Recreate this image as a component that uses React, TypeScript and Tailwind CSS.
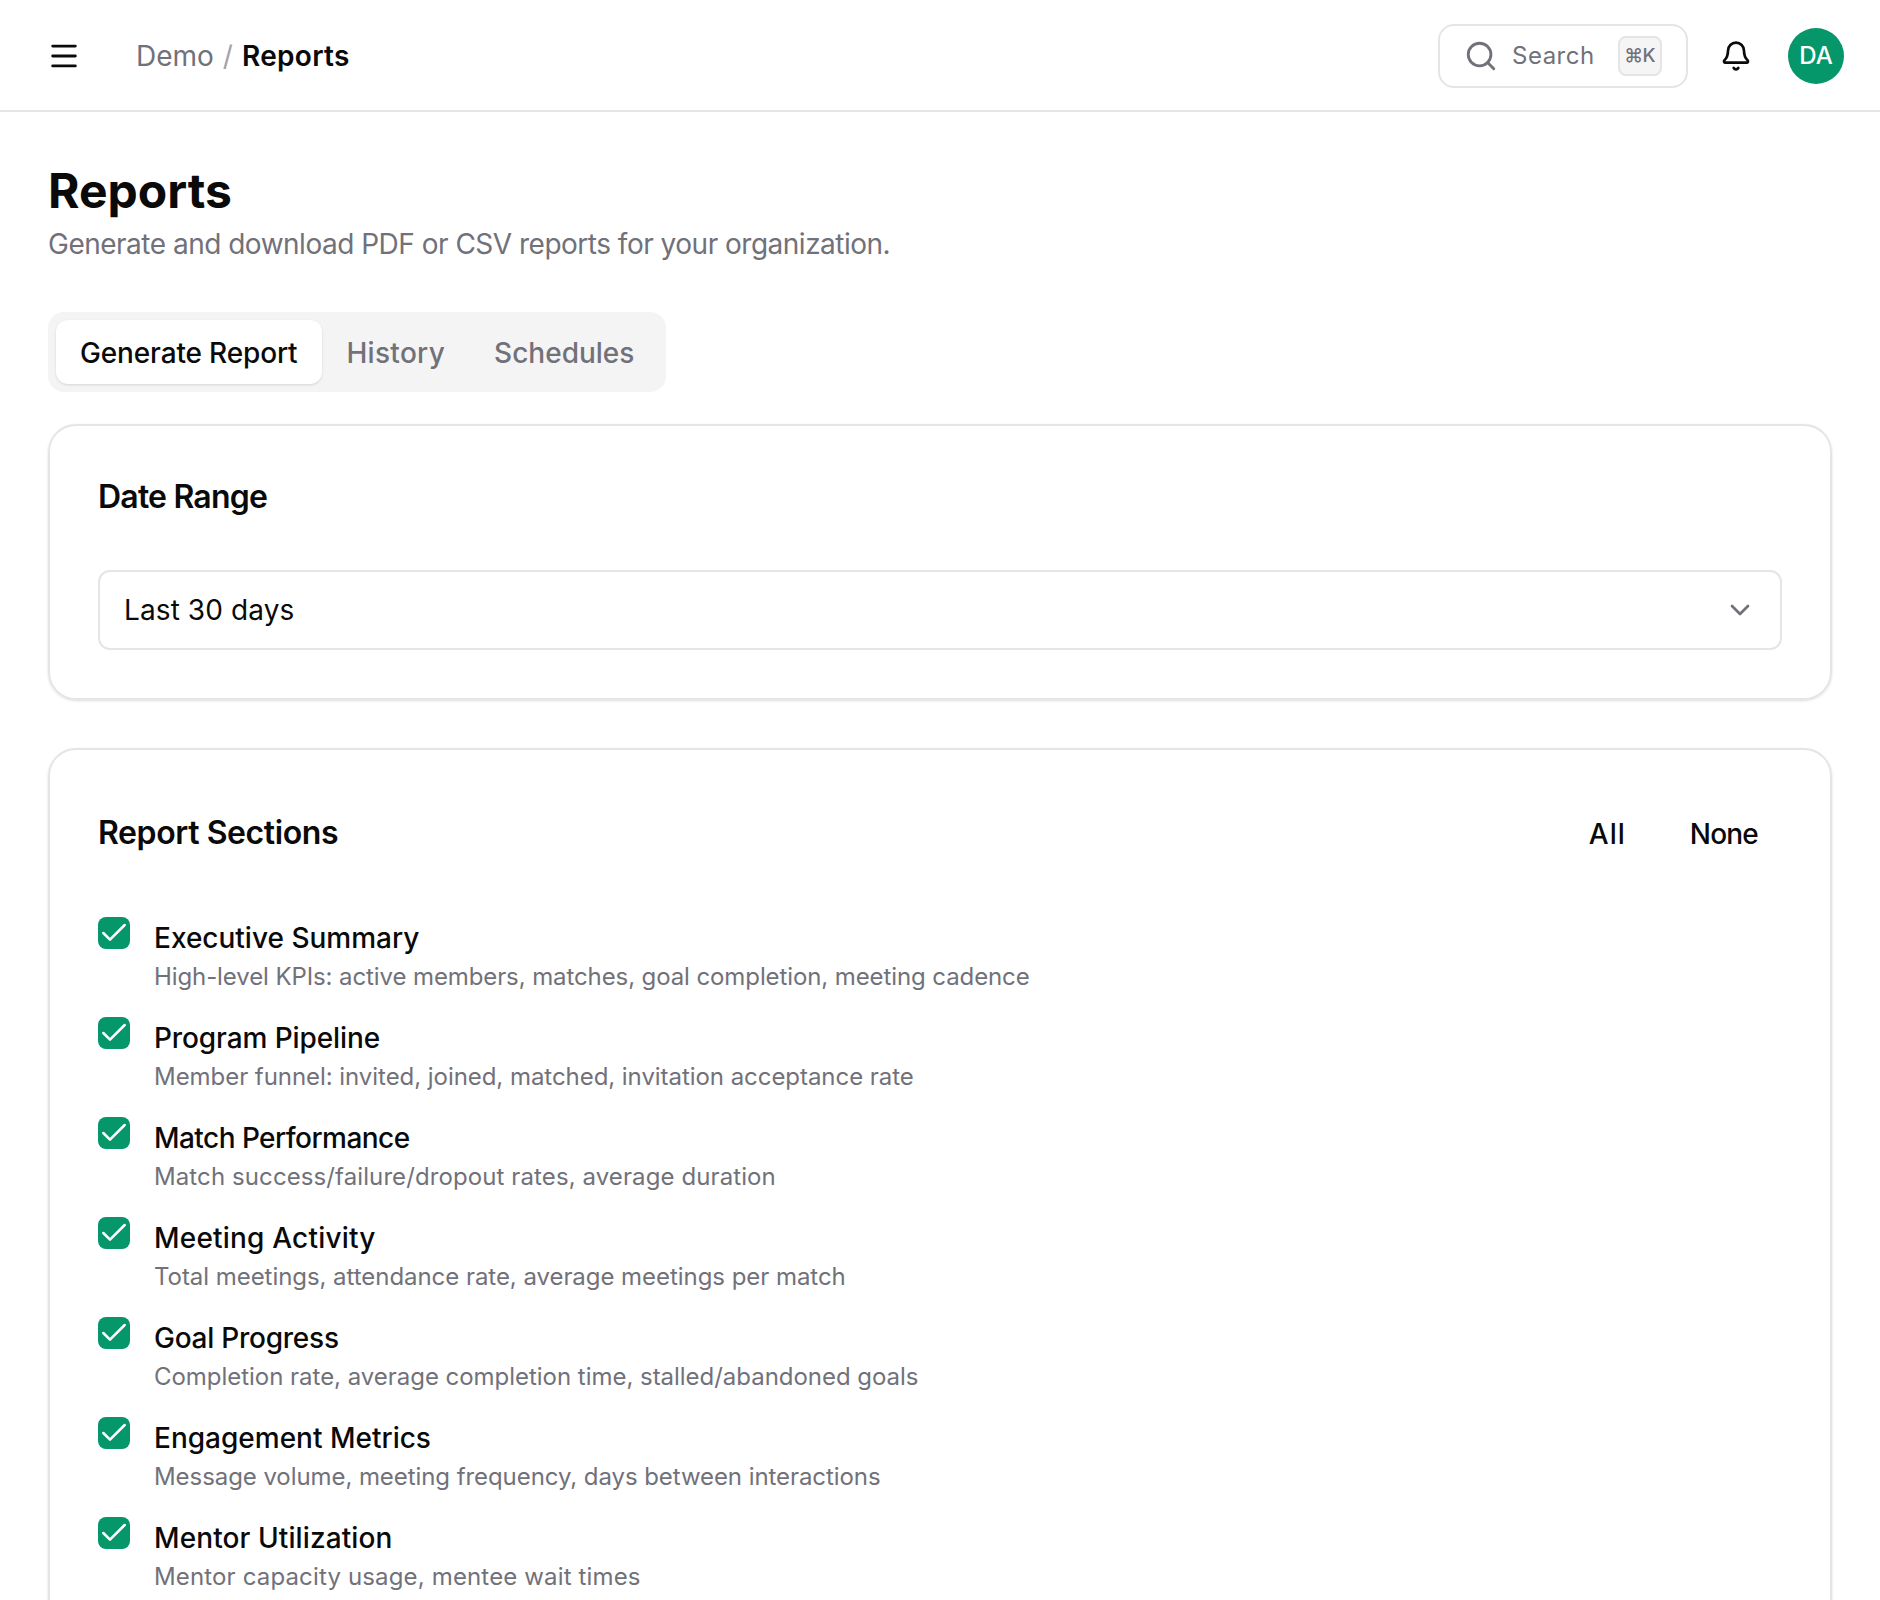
import { Menu, Search, Bell, ChevronDown, Check } from "lucide-react";

const items = [
  ["Executive Summary", "tracking-[0px]", "High-level KPIs: active members, matches, goal completion, meeting cadence", "tracking-[-0.1px]"],
  ["Program Pipeline", "tracking-[-0.1px]", "Member funnel: invited, joined, matched, invitation acceptance rate", "tracking-[-0.05px]"],
  ["Match Performance", "tracking-[-0.55px]", "Match success/failure/dropout rates, average duration", "tracking-[0.1px]"],
  ["Meeting Activity", "tracking-[0.2px]", "Total meetings, attendance rate, average meetings per match", "tracking-[-0.05px]"],
  ["Goal Progress", "tracking-[-0.25px]", "Completion rate, average completion time, stalled/abandoned goals", "tracking-[-0.03px]"],
  ["Engagement Metrics", "tracking-[0px]", "Message volume, meeting frequency, days between interactions", "tracking-[-0.07px]"],
  ["Mentor Utilization", "tracking-[0.1px]", "Mentor capacity usage, mentee wait times", "tracking-[0.15px]"],
];

export default function App() {
  return (
    <div className="h-[1600px] overflow-hidden bg-white font-['Inter',sans-serif] text-[#0a0a0a]">
      <header className="flex h-[112px] items-center border-b-2 border-[#e5e5e5] pl-[47px] pr-[36px] pt-[2px]">
        <Menu size={34} strokeWidth={2} />
        <nav className="ml-[55px] flex items-center gap-[9px] text-[28px] leading-[40px]">
          <span className="text-[#71717a]">Demo</span>
          <span className="text-[#a1a1aa]">/</span>
          <span className="font-semibold tracking-[0.3px]">Reports</span>
        </nav>
        <div className="ml-auto flex h-[64px] w-[250px] items-center rounded-[16px] border-2 border-[#e5e5e5] pl-[24px]">
          <Search size={34} strokeWidth={2} className="text-[#71717a]" />
          <span className="ml-[14px] text-[24px] leading-[32px] tracking-[0.5px] text-[#71717a]">Search</span>
          <span className="ml-[23px] flex h-[40px] w-[44px] items-center justify-center rounded-[8px] border-2 border-[#e5e5e5] bg-[#f5f5f5] text-[19px] font-medium tracking-[-0.5px] text-[#71717a]">⌘K</span>
        </div>
        <Bell size={32} strokeWidth={2} className="ml-[32px]" />
        <div className="ml-[36px] flex h-[56px] w-[56px] items-center justify-center rounded-full bg-[#059669] text-[24px] font-medium text-white">DA</div>
      </header>

      <main className="px-[48px] pt-[51px]">
        <h1 className="text-[48px] font-bold leading-[56px]">Reports</h1>
        <p className="mt-[5px] text-[28px] leading-[40px] tracking-[-0.5px] text-[#71717a]">Generate and download PDF or CSV reports for your organization.</p>

        <div className="mt-[48px] inline-flex h-[80px] items-center rounded-[16px] bg-[#f4f4f5] p-[8px] text-[28px] font-medium">
          <div className="flex h-[64px] items-center rounded-[12px] bg-white pl-[24px] pr-[25px] pt-[2px] tracking-[-0.15px] shadow-sm">Generate Report</div>
          <div className="flex h-[64px] items-center pl-[24px] pr-[25px] pt-[2px] tracking-[0.3px] text-[#71717a]">History</div>
          <div className="flex h-[64px] items-center px-[24px] pt-[2px] text-[#71717a]">Schedules</div>
        </div>

        <section className="mt-[32px] rounded-[28px] border-2 border-[#e5e5e5] p-[48px] shadow-sm">
          <h2 className="-mt-[1px] text-[32px] font-semibold leading-[48px] tracking-[-0.8px]">Date Range</h2>
          <div className="mt-[49px] flex h-[80px] items-center justify-between rounded-[12px] border-2 border-[#e5e5e5] px-[24px] text-[28px]">
            <span className="tracking-[0.1px]">Last 30 days</span>
            <ChevronDown size={32} strokeWidth={2} className="text-[#71717a]" />
          </div>
        </section>

        <section className="mt-[48px] rounded-[28px] border-2 border-[#e5e5e5] p-[48px] shadow-sm">
          <div className="mb-[55px] flex h-[64px] items-center justify-between">
            <h2 className="pt-[6px] text-[32px] font-semibold leading-[48px] tracking-[-0.4px]">Report Sections</h2>
            <div className="flex gap-[16px] pt-[8px] text-[28px] font-medium">
              <button className="px-[24px] tracking-[1px]">All</button>
              <button className="px-[24px] tracking-[-0.8px]">None</button>
            </div>
          </div>
          <div className="flex flex-col gap-[24px]">
            {items.map(([title, titleTracking, desc, descTracking]) => (
              <div key={title} className="flex gap-[24px]">
                <div className="flex h-[32px] w-[32px] shrink-0 items-center justify-center rounded-[8px] bg-[#059669]">
                  <Check size={32} strokeWidth={1.9} className="text-white" />
                </div>
                <div>
                  <div className={`mt-[1px] text-[28px] font-medium leading-[40px] ${titleTracking}`}>{title}</div>
                  <div className={`mt-[3px] text-[24px] leading-[32px] text-[#71717a] ${descTracking}`}>{desc}</div>
                </div>
              </div>
            ))}
          </div>
        </section>
      </main>
    </div>
  );
}
